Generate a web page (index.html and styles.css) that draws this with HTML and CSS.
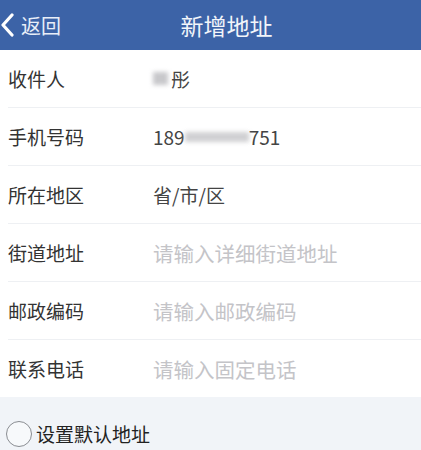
FILE: index.html
```html
<!DOCTYPE html>
<html lang="zh-CN">
<head>
  <meta charset="UTF-8">
  <title>新增地址</title>
  <meta name="viewport" content="width=device-width, initial-scale=1.0">
  <link rel="stylesheet" href="styles.css">
</head>
<body>

  <header class="topbar">
    <a class="back" href="#">
      <svg class="back-icon" width="14" height="24" viewBox="0 0 14 24">
        <path d="M12 2 L3 12 L12 22" fill="none" stroke="#fff" stroke-width="3.2" stroke-linecap="round" stroke-linejoin="round"/>
      </svg>
      返回
    </a>
    <h1>新增地址</h1>
  </header>

  <div class="form">
    <div class="row">
      <span class="label">收件人</span>
      <span class="value"><span class="blur short"></span>彤</span>
    </div>
    <div class="row">
      <span class="label">手机号码</span>
      <span class="value">189<span class="blur long"></span>751</span>
    </div>
    <div class="row">
      <span class="label">所在地区</span>
      <span class="value">省/市/区</span>
    </div>
    <div class="row">
      <span class="label">街道地址</span>
      <span class="placeholder">请输入详细街道地址</span>
    </div>
    <div class="row">
      <span class="label">邮政编码</span>
      <span class="placeholder">请输入邮政编码</span>
    </div>
    <div class="row last">
      <span class="label">联系电话</span>
      <span class="placeholder">请输入固定电话</span>
    </div>
  </div>

  <div class="default-box">
    <label class="default">
      <span class="radio"></span>
      设置默认地址
    </label>
  </div>

</body>
</html>
```

FILE: styles.css
```css
body {
  margin: 0;
  padding: 0;
  font-family: "Noto Sans CJK SC", "Noto Sans", sans-serif;
  background: #f1f4f8;
  width: 421px;
  height: 450px;
  overflow: hidden;
}

.topbar {
  background: #3c63a7;
  height: 50px;
  display: flex;
  align-items: center;
  justify-content: center;
  padding-left: 32px;
  position: relative;
  color: #f2f5fa;
}

.topbar h1 {
  margin: 0;
  font-size: 23px;
  font-weight: normal;
}

.back {
  position: absolute;
  left: 0;
  top: 0;
  height: 50px;
  display: flex;
  align-items: center;
  gap: 7px;
  color: #e8eef8;
  text-decoration: none;
  font-size: 20px;
}

.form {
  background: white;
  padding-left: 8px;
}

.row {
  height: 57px;
  display: flex;
  align-items: center;
  border-bottom: 1px solid #eef0f3;
  font-size: 19px;
}

.row.last {
  border-bottom: none;
}

.label {
  width: 145px;
  color: #333;
}

.value {
  color: #444;
  display: flex;
  align-items: center;
}

.placeholder {
  color: #c4c4c8;
  font-size: 20.5px;
}

.blur {
  display: inline-block;
  background: #c8c8cb;
  filter: blur(2px);
}

.blur.short {
  width: 15px;
  height: 13px;
  margin-right: 3px;
}

.blur.long {
  width: 64px;
  height: 10px;
  opacity: 0.85;
}

.default-box {
  padding: 23px 0 0 6px;
}

.default {
  display: flex;
  align-items: center;
  gap: 4px;
  font-size: 19px;
  color: #222;
}

.radio {
  width: 24px;
  height: 24px;
  border: 1.5px solid #8a8d92;
  border-radius: 50%;
  background: #f7f9fb;
}
```
